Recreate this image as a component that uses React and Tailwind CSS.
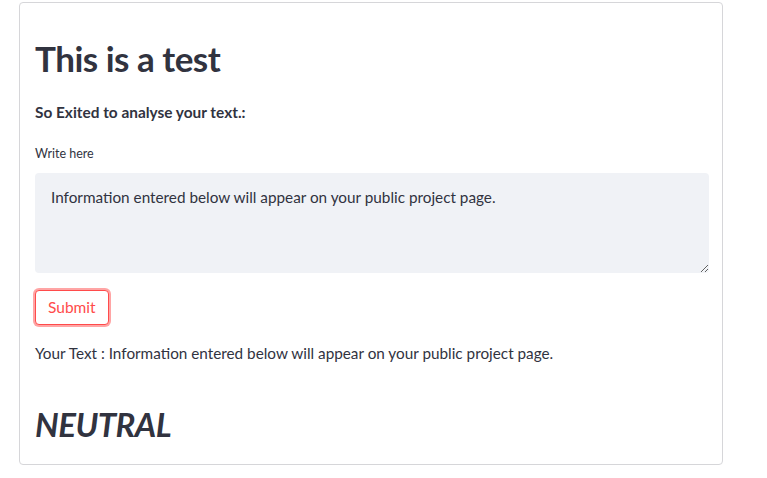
import React from "react";

export default function App() {
  const text = "Information entered below will appear on your public project page.";
  return (
    <div className="w-[767px] h-[478px] bg-white pt-[2px] pl-[19px]" style={{ fontFamily: "Lato, 'Open Sans', sans-serif" }}>
      <div className="w-[704px] h-[463px] border border-[#d6d6d9] rounded-[4px] px-[15px] text-[#31333f]">
        <h1 className="mt-[34px] text-[35px] leading-[42px] font-bold tracking-[-0.5px]">This is a test</h1>
        <p className="mt-[23px] text-[15.4px] leading-[20px] font-bold">So Exited to analyse your text.:</p>
        <label className="block mt-[24px] text-[12.5px] leading-[16px]">Write here</label>
        <div className="mt-[11px] w-[674px]">
          <textarea
            readOnly
            value={text}
            className="block w-full h-[100px] bg-[#f0f2f6] rounded-[4px] px-[16px] py-[12px] text-[15.3px] leading-[24px] text-[#31333f] outline-none resize-y"
            style={{ fontFamily: "Lato, 'Open Sans', sans-serif" }}
          />
        </div>
        <button className="mt-[17px] h-[35px] px-[12px] border border-[#ff4b4b] rounded-[4px] text-[15.5px] text-[#ff4b4b] bg-white shadow-[0_0_0_2px_rgba(255,75,75,0.5)]">
          Submit
        </button>
        <p className="mt-[16px] text-[15.3px] leading-[24px]">Your Text : {text}</p>
        <h1 className="mt-[38px] text-[33px] leading-[42px] font-bold italic tracking-[-0.5px]">NEUTRAL</h1>
      </div>
    </div>
  );
}
